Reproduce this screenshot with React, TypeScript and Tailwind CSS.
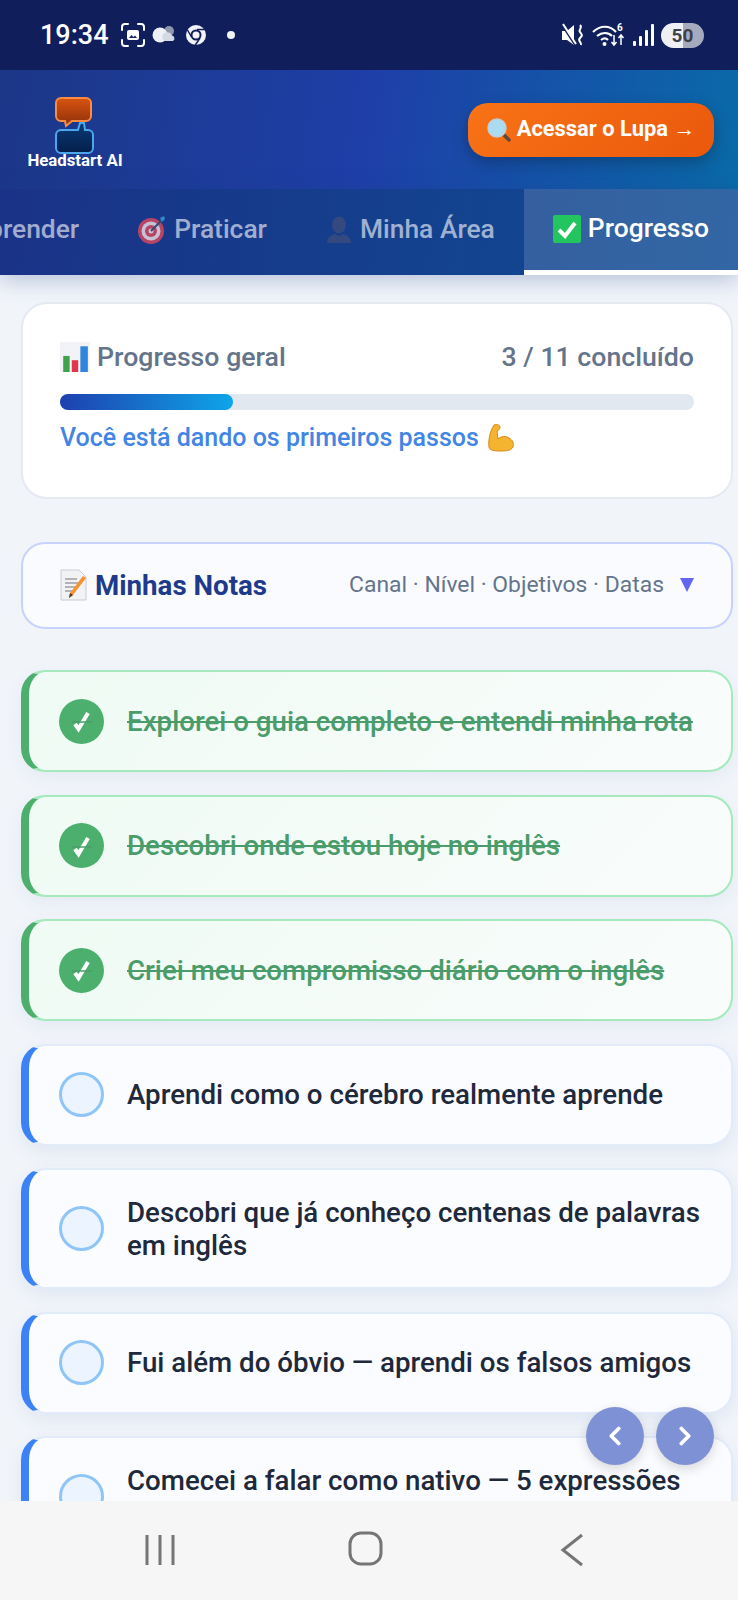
import { ChevronLeft, ChevronRight } from "lucide-react";

const doneItems = [
  "Explorei o guia completo e entendi minha rota",
  "Descobri onde estou hoje no inglês",
  "Criei meu compromisso diário com o inglês",
];

const openItems = [
  "Aprendi como o cérebro realmente aprende",
  "Descobri que já conheço centenas de palavras em inglês",
  "Fui além do óbvio — aprendi os falsos amigos",
];

function StatusIcons() {
  return (
    <div className="flex items-center">
      {/* screenshot */}
      <svg width="26" height="26" viewBox="0 0 26 26" fill="none" className="ml-[11px]">
        <path d="M2 8V5a3 3 0 0 1 3-3h3M18 2h3a3 3 0 0 1 3 3v3M24 18v3a3 3 0 0 1-3 3h-3M8 24H5a3 3 0 0 1-3-3v-3" stroke="#fff" strokeWidth="2" strokeLinecap="round" />
        <rect x="7" y="8" width="12" height="10" rx="2" fill="#fff" />
        <path d="M9 16l2.500-3 2 2 1.500-1.500 2 2.500z" fill="#17265f" />
      </svg>
      {/* weather */}
      <svg width="26" height="20" viewBox="0 0 26 20" className="ml-[5px]">
        <circle cx="18" cy="6" r="5" fill="#8f97ad" />
        <circle cx="9" cy="10" r="7.500" fill="#eef0f6" />
        <path d="M14 16a4.500 4.500 0 0 1 1-8.500 4.500 4.500 0 0 1 6 3 3 3 0 0 1 1 5.500z" fill="#d5d9e4" />
      </svg>
      {/* chrome */}
      <svg width="22" height="22" viewBox="0 0 22 22" fill="none" className="ml-[8px]">
        <circle cx="11" cy="11" r="10" fill="#f2f3f7" />
        <circle cx="11" cy="11" r="5.500" fill="#101f5c" />
        <circle cx="11" cy="11" r="3.500" fill="#f2f3f7" />
        <path d="M12 5.500h9M6.500 13L2.500 6M15 14l-5 7.500" stroke="#101f5c" strokeWidth="1.500" />
      </svg>
      <span className="ml-[20px] h-[8px] w-[8px] rounded-full bg-[#f2f3f7]" />
    </div>
  );
}

function SystemIcons() {
  return (
    <div className="flex items-center">
      {/* vibrate mute */}
      <svg width="24" height="24" viewBox="0 0 24 24" fill="none">
        <path d="M1 8h5l7-6v20l-7-5H1z" fill="#fff" />
        <path d="M1 2l13 20" stroke="#17265f" strokeWidth="2" />
        <path d="M2 1l13 20" stroke="#fff" strokeWidth="2" />
        <path d="M19 2c3 3-2 4 0 7s3 3 0 6 2 4 1 7" stroke="#fff" strokeWidth="2" />
      </svg>
      {/* wifi */}
      <svg width="34" height="26" viewBox="0 0 34 26" fill="none" className="ml-[7px]">
        <path d="M1 10c7-7 17-7 23 0M5 14c5-4 11-4 15 0M9 18c2.500-2 5-2 7 0" stroke="#fff" strokeWidth="2.200" />
        <circle cx="12.500" cy="22" r="2" fill="#fff" />
        <text x="25" y="9" fill="#fff" fontSize="10" fontWeight="700" fontFamily="Roboto">6</text>
        <path d="M22 13v10M19.500 20l2.500 3 2.500-3M29 23V13M26.500 16l2.500-3 2.500 3" stroke="#fff" strokeWidth="1.500" />
      </svg>
      {/* signal */}
      <svg width="22" height="24" viewBox="0 0 22 24" className="ml-[6px]">
        <rect x="1" y="18" width="3" height="5" rx="1" fill="#fff" />
        <rect x="7" y="13" width="3" height="10" rx="1" fill="#fff" />
        <rect x="13" y="7" width="3" height="16" rx="1" fill="#fff" />
        <rect x="19" y="1" width="3" height="22" rx="1" fill="#fff" />
      </svg>
      <div className="ml-[7px] flex h-[25px] w-[43px] items-center justify-center rounded-full bg-[linear-gradient(90deg,#eef0f5_50%,#a5aabf_50%)] text-[19px] leading-none font-bold text-[#3e4049]">
        50
      </div>
    </div>
  );
}

function Logo() {
  return (
    <div className="flex w-[102px] flex-col items-center pt-[6px]">
      <svg width="40" height="57" viewBox="0 0 40 57">
        <defs>
          <linearGradient id="logoTop" x1="0" y1="0" x2="0" y2="1">
            <stop offset="0" stopColor="#d9540f" />
            <stop offset="1" stopColor="#8e2f0c" />
          </linearGradient>
          <linearGradient id="logoBottom" x1="0" y1="0" x2="0" y2="1">
            <stop offset="0" stopColor="#0a3a78" />
            <stop offset="1" stopColor="#051f4a" />
          </linearGradient>
        </defs>
        <path d="M6 1h25a5 5 0 0 1 5 5v13a5 5 0 0 1-5 5H17l-6 5-1-5H6a5 5 0 0 1-5-5V6a5 5 0 0 1 5-5z" fill="url(#logoTop)" stroke="#fb8a45" strokeWidth="2" />
        <path d="M6 33h17l2-7h4l1 7h3a5 5 0 0 1 5 5v13a5 5 0 0 1-5 5H6a5 5 0 0 1-5-5V38a5 5 0 0 1 5-5z" fill="url(#logoBottom)" stroke="#4ba6ee" strokeWidth="2" />
      </svg>
      <span className="mt-[-3px] text-[16.8px] leading-[18px] font-bold whitespace-nowrap text-white">Headstart AI</span>
    </div>
  );
}

function Target() {
  return (
    <svg width="30" height="30" viewBox="0 0 30 30" className="opacity-80">
      <circle cx="14" cy="16" r="13" fill="#e0485c" />
      <circle cx="14" cy="16" r="9.500" fill="#f3e4e8" />
      <circle cx="14" cy="16" r="6" fill="#e0485c" />
      <circle cx="14" cy="16" r="2.500" fill="#f3e4e8" />
      <path d="M14 16L26 4" stroke="#40506e" strokeWidth="2" />
      <path d="M23 3l4-2 1 3-3 3z" fill="#3b9fe0" />
    </svg>
  );
}

function Person() {
  return (
    <svg width="28" height="28" viewBox="0 0 28 28">
      <ellipse cx="14" cy="9" rx="7" ry="8.500" fill="#33497f" />
      <path d="M2 27c0-6 4-8 8-9l4 2 4-2c4 1 8 3 8 9z" fill="#33497f" />
    </svg>
  );
}

function CheckBox() {
  return (
    <svg width="28" height="28" viewBox="0 0 28 28">
      <rect width="28" height="28" rx="2" fill="#22c55e" />
      <path d="M6 15l6 6 10-13" fill="none" stroke="#fff" strokeWidth="4" />
    </svg>
  );
}

function Magnifier() {
  return (
    <svg width="24" height="24" viewBox="0 0 24 24">
      <path d="M15 15l7 7" stroke="#5d4a3c" strokeWidth="3.500" strokeLinecap="round" />
      <circle cx="10" cy="10" r="9" fill="#a9dcf2" stroke="#c3ccd3" strokeWidth="1.500" />
    </svg>
  );
}

function BarsEmoji() {
  return (
    <svg width="30" height="30" viewBox="0 0 28 28">
      <rect width="28" height="28" fill="#f1f3f6" />
      <rect x="3" y="13" width="6" height="15" fill="#3fa34d" />
      <rect x="11" y="17" width="6" height="11" fill="#e0364c" />
      <rect x="19" y="4" width="7" height="24" fill="#2f86de" />
    </svg>
  );
}

function Memo() {
  return (
    <svg width="28" height="32" viewBox="0 0 28 32">
      <path d="M1 1h18l7 7v23H1z" fill="#f1f2f3" stroke="#c9ccd1" />
      <path d="M5 10h12M5 14h14M5 18h10M5 22h8" stroke="#9a9ea6" strokeWidth="1.300" />
      <path d="M26 9L13 26l-4 3 1-5L23 7z" fill="#f59331" />
      <path d="M10 24l-1 5 4-3z" fill="#4b3a2c" />
    </svg>
  );
}

function Muscle() {
  return (
    <svg width="26" height="28" viewBox="0 0 26 28">
      <path d="M6 1c3-1 6 0 6 2s-1 3-3 4l1 8c3-3 8-3 11-1 4 2 5 6 4 9-2 4-8 4-13 4-6 0-11-1-11-4C0 17 2 7 6 1z" fill="#f5b430" stroke="#d58a17" strokeWidth="1" />
    </svg>
  );
}

function Tab({ icon, label, active }: { icon?: React.ReactNode; label: string; active?: boolean }) {
  return (
    <div
      className={`flex h-full shrink-0 items-center gap-[7px] px-[29px] text-[26.4px] font-medium whitespace-nowrap ${
        active ? "border-b-[5px] border-white bg-white/15 pb-[1px] text-white" : "pb-[5px] text-white/60"
      }`}
    >
      {icon}
      {label}
    </div>
  );
}

function DoneItem({ text }: { text: string }) {
  return (
    <div className="flex h-[102px] shrink-0 items-center gap-[23px] rounded-[24px] border-2 border-l-[8px] border-[#a5e9bd] border-l-[#4caf6e] bg-[linear-gradient(135deg,#effbf4,#f9fcfb)] pr-[20px] pl-[30px] shadow-[0_6px_18px_rgba(30,58,138,0.06)]">
      <div className="flex h-[45px] w-[45px] shrink-0 items-center justify-center rounded-full bg-[#4caf6e]">
        <svg width="24" height="24" viewBox="0 0 24 24" fill="none">
          <path d="M5 15l3.500 5L18 4" stroke="#fff" strokeWidth="4" />
          <path d="M2 13h20" stroke="#4b9c6b" strokeWidth="1.500" />
        </svg>
      </div>
      <span className="text-[27.7px] leading-[33px] font-medium text-[#4b9c6b] line-through">{text}</span>
    </div>
  );
}

function OpenItem({ text, clipped }: { text: string; clipped?: boolean }) {
  return (
    <div className="flex min-h-[102px] shrink-0 items-center gap-[23px] rounded-[24px] border-2 border-l-[8px] border-[#e2ebfa] border-l-[#3b82f6] bg-[#fbfcff] py-[25.5px] pr-[20px] pl-[30px] shadow-[0_6px_18px_rgba(30,58,138,0.08)]">
      <div className="h-[45px] w-[45px] shrink-0 rounded-full border-[3px] border-[#90c5f8] bg-[#ebf4ff]" />
      <span className={`text-[27.7px] leading-[33px] font-medium text-[#1e293b] ${clipped ? "min-h-[66px]" : ""}`}>{text}</span>
    </div>
  );
}

export default function App() {
  return (
    <div className="relative flex h-[1600px] w-[738px] flex-col overflow-hidden bg-[#f1f5fa] font-[Roboto,sans-serif]">
      <div className="flex h-[70px] shrink-0 items-center justify-between bg-[#101f5c] pr-[34px] pl-[40px] text-white">
        <div className="flex items-center">
          <span className="text-[27px] leading-none font-medium">19:34</span>
          <StatusIcons />
        </div>
        <SystemIcons />
      </div>

      <header className="flex h-[119px] shrink-0 items-center justify-between bg-[linear-gradient(100deg,#1c3787,#1e3fa8_50%,#0a6aa8)] pr-[24px] pl-[24px]">
        <Logo />
        <button className="flex h-[54px] w-[246px] items-center justify-center gap-[6px] rounded-[20px] bg-[linear-gradient(135deg,#f97316,#ea580c)] text-[21.9px] font-bold text-white shadow-[0_6px_16px_rgba(0,0,0,0.25)]">
          <Magnifier />
          Acessar o Lupa →
        </button>
      </header>

      <nav className="z-10 flex h-[86px] shrink-0 justify-end overflow-hidden bg-[linear-gradient(100deg,#1a3287,#0f4c94)] shadow-[0_4px_22px_rgba(30,58,138,0.3)]">
        <Tab label="Aprender" />
        <Tab icon={<Target />} label="Praticar" />
        <Tab icon={<Person />} label="Minha Área" />
        <Tab icon={<CheckBox />} label="Progresso" active />
      </nav>

      <main className="flex min-h-0 flex-1 flex-col overflow-hidden pt-[27px] pr-[5px] pl-[21px]">
        <section className="flex h-[197px] shrink-0 flex-col rounded-[26px] border-2 border-[#e4e9f2] bg-white px-[37px] pt-[33px]">
          <div className="flex items-center justify-between text-[26.7px] leading-[40px] font-medium text-[#64748b]">
            <span className="flex items-center gap-[7px]">
              <BarsEmoji />
              Progresso geral
            </span>
            <span>3 / 11 concluído</span>
          </div>
          <div className="mt-[17px] h-[16px] rounded-full bg-[#e2e8f0]">
            <div className="h-full w-[27.3%] rounded-full bg-[linear-gradient(90deg,#1e40af,#0ea5e9)]" />
          </div>
          <div className="mt-[8px] flex items-center gap-[9px] text-[25px] leading-[40px] font-medium text-[#4285e4]">
            Você está dando os primeiros passos
            <Muscle />
          </div>
        </section>

        <section className="mt-[43px] flex h-[87px] shrink-0 items-center justify-between rounded-[24px] border-2 border-[#c7d2fe] bg-[#fafbff] px-[37px]">
          <span className="flex items-center gap-[7px] text-[27.7px] font-bold text-[#1e3a8a]">
            <Memo />
            Minhas Notas
          </span>
          <span className="flex items-center gap-[16px] text-[22.9px] text-[#64748b]">
            Canal · Nível · Objetivos · Datas
            <svg width="14" height="16" viewBox="0 0 14 16">
              <path d="M0 1h14L7 15z" fill="#6366f1" />
            </svg>
          </span>
        </section>

        <div className="mt-[41px] flex flex-col gap-[22.5px]">
          {doneItems.map((text) => (
            <DoneItem key={text} text={text} />
          ))}
          {openItems.map((text) => (
            <OpenItem key={text} text={text} />
          ))}
          <OpenItem text="Comecei a falar como nativo — 5 expressões" clipped />
        </div>
      </main>

      <div className="absolute top-[1407px] left-[586px] flex gap-[12px]">
        <button className="flex h-[58px] w-[58px] items-center justify-center rounded-full bg-[#7e91d4] text-white shadow-[0_4px_12px_rgba(0,0,0,0.15)]">
          <ChevronLeft size={30} strokeWidth={3} />
        </button>
        <button className="flex h-[58px] w-[58px] items-center justify-center rounded-full bg-[#7e91d4] text-white shadow-[0_4px_12px_rgba(0,0,0,0.15)]">
          <ChevronRight size={30} strokeWidth={3} />
        </button>
      </div>

      <footer className="z-10 flex h-[99px] shrink-0 items-center justify-between bg-[#f6f6f6] pr-[154px] pb-[2px] pl-[144px]">
        <svg width="32" height="32" viewBox="0 0 32 32" fill="none">
          <path d="M3 1v30M16 1v30M29 1v30" stroke="#757575" strokeWidth="3" />
        </svg>
        <svg width="36" height="36" viewBox="0 0 36 36" fill="none" className="ml-[-5px] -mt-[3px]">
          <rect x="2" y="3" width="31" height="31" rx="11" stroke="#757575" strokeWidth="3" />
        </svg>
        <svg width="24" height="34" viewBox="0 0 24 34" fill="none">
          <path d="M22 2L3 17l19 15" stroke="#757575" strokeWidth="3" />
        </svg>
      </footer>
    </div>
  );
}
